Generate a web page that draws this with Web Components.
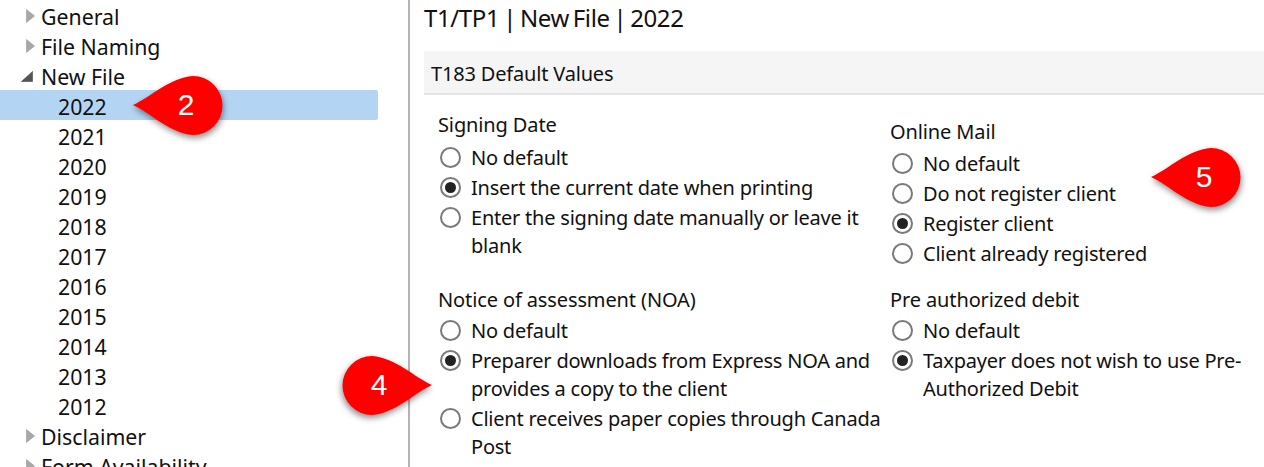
<!DOCTYPE html>
<html><head><meta charset="utf-8"><title>Options</title>
<style>
html,body{margin:0;padding:0;height:467px;overflow:hidden;background:#fff}
body{font-family:"Noto Sans",sans-serif;color:#111;position:relative}
</style></head><body>
<x-app></x-app>
<script>
const font='"Noto Sans",sans-serif';
class XTreeRow extends HTMLElement{
  constructor(){super();const s=this.attachShadow({mode:'open'});
    const st=this.getAttribute('state')||'leaf';
    const arrow=st==='closed'?'<svg width="9" height="14" viewBox="0 0 9 14"><path d="M.5.5 8.5 7 .5 13.5Z" fill="#a8a8a8" stroke="#999" stroke-width=".6"/></svg>':
      st==='open'?'<svg width="12" height="11" viewBox="0 0 12 11"><path d="M11.5.5V10.5H.5Z" fill="#555" stroke="#444" stroke-width=".6"/></svg>':'';
    s.innerHTML=`<style>
    :host{display:flex;align-items:center;height:30px;padding-top:2px;font:21.3px ${font};letter-spacing:0;white-space:nowrap;box-sizing:border-box;width:378px;border-radius:0 2px 2px 0}
    :host([selected]){background:#b3d5f3}
    .a{width:41px;flex:none;position:relative;height:28px}
    svg{position:absolute}
    :host([state=closed]) svg{left:26px;top:7px}
    :host([state=open]) svg{left:21px;top:9px}
    :host([state=leaf]) .a{width:58px}
    </style><span class="a">${arrow}</span><slot></slot>`;}
}
class XRadio extends HTMLElement{
  constructor(){super();const s=this.attachShadow({mode:'open'});
    s.innerHTML=`<style>
    :host{display:flex;align-items:flex-start;font:20px/28px ${font};letter-spacing:-.22px;padding:1px 0;column-gap:10px}
    svg{flex:none;margin-top:3px;margin-left:2px;width:21px;height:21px}
    </style><svg viewBox="0 0 21 21"><circle cx="10.5" cy="10.5" r="9.5" fill="#fff" stroke="#7a7a7a" stroke-width="2"/>${this.hasAttribute('checked')?'<circle cx="10.5" cy="10.5" r="5.5" fill="#222"/>':''}</svg><span><slot></slot></span>`;}
}
class XGroup extends HTMLElement{
  constructor(){super();const s=this.attachShadow({mode:'open'});
    s.innerHTML=`<style>
    :host{display:block}
    .l{font:20px/30px ${font};letter-spacing:-.12px;margin-bottom:var(--label-gap,3px)}
    </style><div class="l">${this.getAttribute('label')}</div><slot></slot>`;}
}
class XBadge extends HTMLElement{
  constructor(){super();const s=this.attachShadow({mode:'open'});
    const flip=this.hasAttribute('flip');
    s.innerHTML=`<style>
    :host{position:absolute;display:block;width:92px;height:62px;left:${this.getAttribute('x')}px;top:${this.getAttribute('y')}px}
    svg{position:absolute;left:0;top:0;overflow:visible;filter:drop-shadow(1px 3px 3px rgba(0,0,0,.45));${flip?'transform:scaleX(-1);':''}}
    span{position:absolute;top:12px;${flip?'right':'left'}:53px;transform:translateX(${flip?'50%':'-50%'});font:30px/36px "Liberation Sans",sans-serif;color:#fff}
    </style><svg width="92" height="62" viewBox="0 0 92 62"><path d="M0 30C18 22 36 3 60 1A29.5 29.5 0 0 1 60 60C36 58 18 38 0 30Z" fill="#fe0000"/></svg><span><slot></slot></span>`;}
}
class XApp extends HTMLElement{
  constructor(){super();const s=this.attachShadow({mode:'open'});
    const years=[2022,2021,2020,2019,2018,2017,2016,2015,2014,2013,2012];
    s.innerHTML=`<style>
    :host{display:grid;grid-template-columns:408px 2px 1fr;height:467px;overflow:hidden;position:relative}
    .sep{background:#b4b4b4}
    .main{padding-left:14px;min-width:0}
    h1{font:400 24px/32px ${font};letter-spacing:-.38px;word-spacing:-2px;margin:0;padding-top:2px;height:51px;box-sizing:border-box}
    .sec{background:#f5f5f5;border-bottom:2px solid #e4e4e4;height:44px;box-sizing:border-box;padding-left:7px;font:20px/46px ${font};letter-spacing:-.18px}
    .grid{display:grid;grid-template-columns:452px 1fr;padding-left:14px;padding-top:15px}
    .c1b{padding-top:7px;--label-gap:2px}
    .r2{padding-top:16px;--label-gap:1px}
    </style>
    <div class="tree">
      <x-tree-row state="closed">General</x-tree-row>
      <x-tree-row state="closed">File Naming</x-tree-row>
      <x-tree-row state="open">New File</x-tree-row>
      ${years.map((y,i)=>`<x-tree-row state="leaf" ${i==0?'selected':''}>${y}</x-tree-row>`).join('')}
      <x-tree-row state="closed">Disclaimer</x-tree-row>
      <x-tree-row state="closed">Form Availability</x-tree-row>
    </div>
    <div class="sep"></div>
    <div class="main">
      <h1>T1/TP1 | New File | 2022</h1>
      <div class="sec">T183 Default Values</div>
      <div class="grid">
        <x-group label="Signing Date">
          <x-radio>No default</x-radio>
          <x-radio checked>Insert the current date when printing</x-radio>
          <x-radio>Enter the signing date manually or leave it blank</x-radio>
        </x-group>
        <x-group class="c1b" label="Online Mail">
          <x-radio>No default</x-radio>
          <x-radio>Do not register client</x-radio>
          <x-radio checked>Register client</x-radio>
          <x-radio>Client already registered</x-radio>
        </x-group>
        <x-group class="r2" label="Notice of assessment (NOA)">
          <x-radio>No default</x-radio>
          <x-radio checked>Preparer downloads from Express NOA and provides a copy to the client</x-radio>
          <x-radio>Client receives paper copies through Canada Post</x-radio>
        </x-group>
        <x-group class="r2" label="Pre authorized debit">
          <x-radio>No default</x-radio>
          <x-radio checked>Taxpayer does not wish to use Pre-Authorized Debit</x-radio>
        </x-group>
      </div>
    </div>
    <x-badge x="133" y="75">2</x-badge>
    <x-badge x="1151" y="147">5</x-badge>
    <x-badge x="340" y="355" flip>4</x-badge>`;}
}
customElements.define('x-tree-row',XTreeRow);
customElements.define('x-radio',XRadio);
customElements.define('x-group',XGroup);
customElements.define('x-badge',XBadge);
customElements.define('x-app',XApp);
</script>
</body></html>
